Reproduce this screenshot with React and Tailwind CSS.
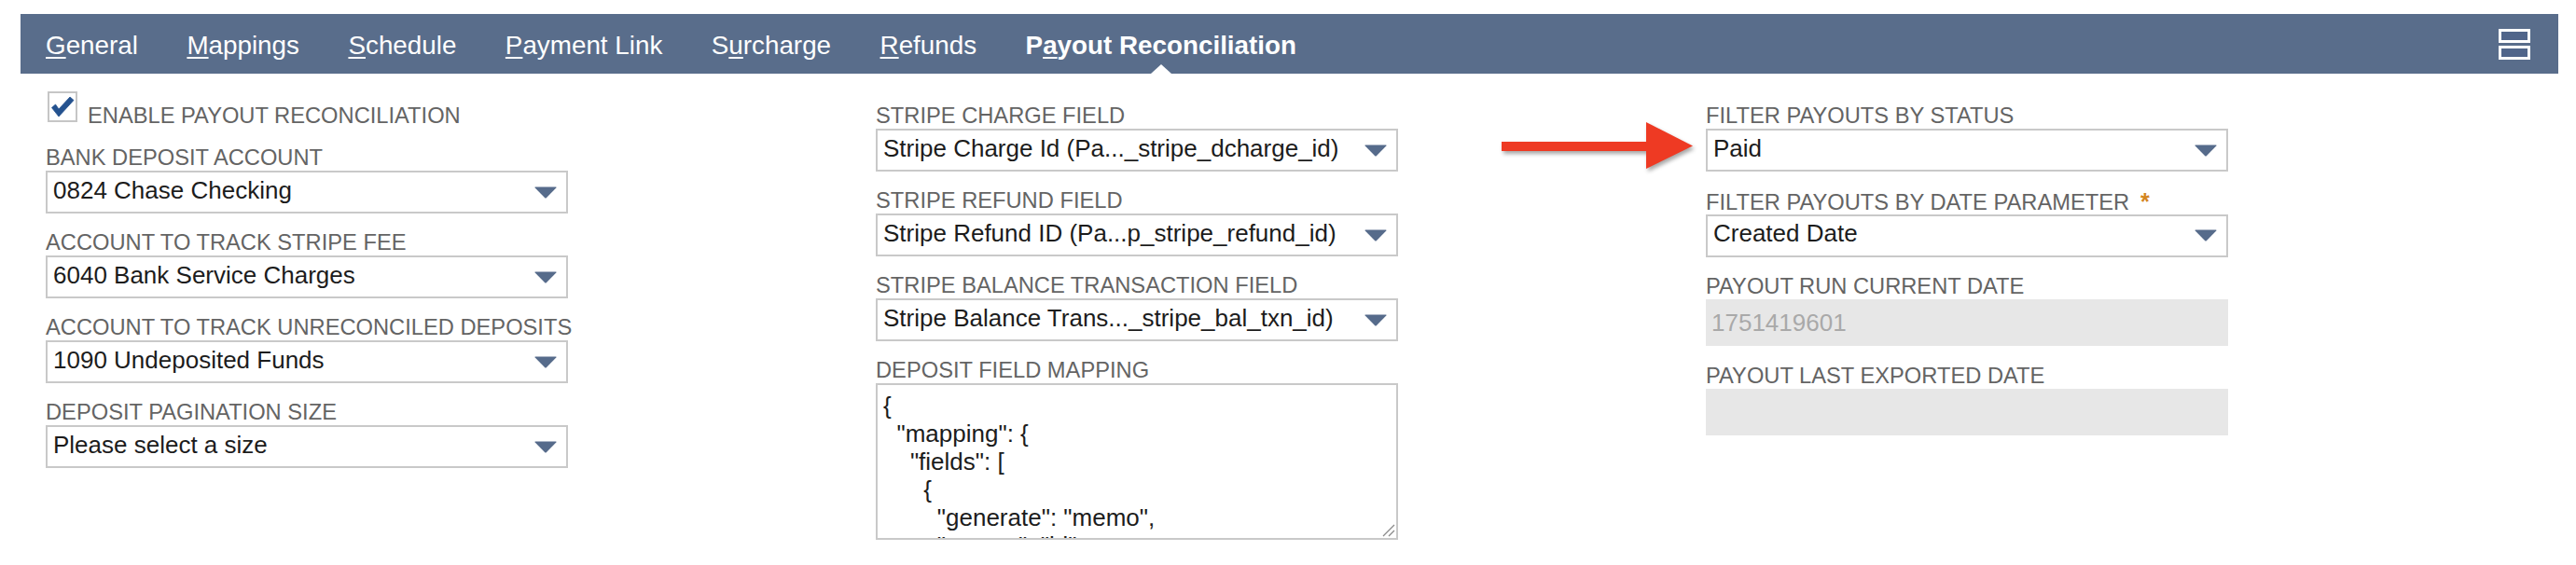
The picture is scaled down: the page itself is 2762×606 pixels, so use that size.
import React from "react";

const Caret = () => (
  <svg width="24" height="13" viewBox="0 0 24 13" className="shrink-0">
    <path d="M1 0.5 L23 0.5 Q24 0.5 23.3 1.6 L13 12 Q12 13 11 12 L0.7 1.6 Q0 0.5 1 0.5 Z" fill="#566b8b" />
  </svg>
);

const Label = ({ children }) => (
  <div className="h-[34px] pt-[8px] leading-[24px] text-[23.7px] text-[#646464] whitespace-nowrap">
    {children}
  </div>
);

const SelectBox = ({ value }) => (
  <div className="w-[560px] h-[46px] border-2 border-[#c9c9c9] bg-white flex items-center justify-between pl-[6px] pr-[10px]">
    <span className="text-[26px] leading-[29px] pb-[4px] text-[#1c1c1c] whitespace-nowrap">{value}</span>
    <Caret />
  </div>
);

const SelectField = ({ label, value }) => (
  <div className="flex flex-col">
    <Label>{label}</Label>
    <SelectBox value={value} />
  </div>
);

const DisabledField = ({ label, value }) => (
  <div className="flex flex-col">
    <Label>{label}</Label>
    <div className="w-[560px] h-[50px] bg-[#e7e7e7] pl-[6px] pt-[11px] text-[26px] leading-[29px] text-[#a9a9a9]">
      {value}
    </div>
  </div>
);

const Tab = ({ pre, u, post, active }) => (
  <div className={"relative text-white text-[27.8px] leading-[32px] whitespace-nowrap " + (active ? "font-bold" : "")}>
    {pre}
    <span className="underline underline-offset-[3px] decoration-[2px]">{u}</span>
    {post}
    {active && (
      <div className="absolute top-[36px] left-1/2 -translate-x-1/2 w-0 h-0 border-l-[11px] border-r-[11px] border-b-[10px] border-l-transparent border-r-transparent border-b-white" />
    )}
  </div>
);

const jsonText = `{
  "mapping": {
    "fields": [
      {
        "generate": "memo",
        "extract": "id",`;

export default function App() {
  return (
    <div className="relative min-h-screen bg-white pt-[15px] font-['Liberation_Sans',Arial,sans-serif]">
      {/* Tab bar */}
      <div className="ml-[22px] mr-[19px] h-[64px] bg-[#596d8b] flex items-start justify-between pl-[27px] pr-[30px]">
        <div className="flex gap-[52.5px] pt-[18px]">
          <Tab pre="" u="G" post="eneral" />
          <Tab pre="" u="M" post="appings" />
          <Tab pre="" u="S" post="chedule" />
          <Tab pre="" u="P" post="ayment Link" />
          <Tab pre="S" u="u" post="rcharge" />
          <Tab pre="" u="R" post="efunds" />
          <Tab pre="P" u="a" post="yout Reconciliation" active />
        </div>
        <div className="self-center flex flex-col gap-[3px]">
          <div className="w-[34px] h-[15px] border-[3px] border-white bg-[#50658a]" />
          <div className="w-[34px] h-[15px] border-[3px] border-white bg-[#50658a]" />
        </div>
      </div>

      {/* Content */}
      <div className="flex pl-[49px] pt-[25px] gap-[320px]">
        {/* Column 1 */}
        <div className="w-[570px] flex flex-col gap-[11px]">
          <div className="h-[34px] flex items-end">
            <div className="ml-[2px] mb-[7px] w-[32px] h-[33px] border-2 border-[#c6c6c6] bg-white shrink-0 relative">
              <svg width="30" height="30" viewBox="0 0 30 30" className="absolute left-0 top-0">
                <path d="M2.5 15.5 L6.5 12 L10 17 L22 4 L26 7.5 L10 25 Z" fill="#24528f" stroke="#24528f" strokeWidth="0.8" strokeLinejoin="round" />
              </svg>
            </div>
            <div className="ml-[11px]">
              <Label>ENABLE PAYOUT RECONCILIATION</Label>
            </div>
          </div>
          <SelectField label="BANK DEPOSIT ACCOUNT" value="0824 Chase Checking" />
          <SelectField label="ACCOUNT TO TRACK STRIPE FEE" value="6040 Bank Service Charges" />
          <SelectField label="ACCOUNT TO TRACK UNRECONCILED DEPOSITS" value="1090 Undeposited Funds" />
          <SelectField label="DEPOSIT PAGINATION SIZE" value="Please select a size" />
        </div>

        {/* Column 2 */}
        <div className="w-[570px] flex flex-col gap-[11px]">
          <SelectField label="STRIPE CHARGE FIELD" value="Stripe Charge Id (Pa..._stripe_dcharge_id)" />
          <SelectField label="STRIPE REFUND FIELD" value="Stripe Refund ID (Pa...p_stripe_refund_id)" />
          <SelectField label="STRIPE BALANCE TRANSACTION FIELD" value="Stripe Balance Trans..._stripe_bal_txn_id)" />
          <div className="flex flex-col">
            <Label>DEPOSIT FIELD MAPPING</Label>
            <div className="relative w-[560px] h-[168px] border-2 border-[#c9c9c9] bg-white overflow-hidden pl-[6px] pt-[7px] text-[26px] leading-[30px] text-[#1c1c1c] whitespace-pre">
              {jsonText}
              <svg width="16" height="16" viewBox="0 0 16 16" className="absolute right-[1px] bottom-[1px]">
                <line x1="15" y1="3" x2="3" y2="15" stroke="#8a8a8a" strokeWidth="1.2" />
                <line x1="15" y1="9" x2="9" y2="15" stroke="#8a8a8a" strokeWidth="1.2" />
              </svg>
            </div>
          </div>
        </div>

        {/* Column 3 */}
        <div className="w-[570px] flex flex-col gap-[11.5px]">
          <SelectField label="FILTER PAYOUTS BY STATUS" value="Paid" />
          <SelectField
            label={
              <>
                FILTER PAYOUTS BY DATE PARAMETER
                <span className="ml-[12px] font-bold text-[25px] text-[#d4861f]">*</span>
              </>
            }
            value="Created Date"
          />
          <DisabledField label="PAYOUT RUN CURRENT DATE" value="1751419601" />
          <DisabledField label="PAYOUT LAST EXPORTED DATE" value="" />
        </div>
      </div>

      {/* Annotation arrow */}
      <svg
        width="230"
        height="75"
        viewBox="0 0 230 75"
        className="absolute left-[1600px] top-[120px] drop-shadow-[2px_3px_2px_rgba(0,0,0,0.35)]"
      >
        <rect x="10" y="32" width="160" height="10" fill="#ee3a23" />
        <polygon points="165,11 215,36.5 165,61" fill="#ee3a23" />
      </svg>
    </div>
  );
}
